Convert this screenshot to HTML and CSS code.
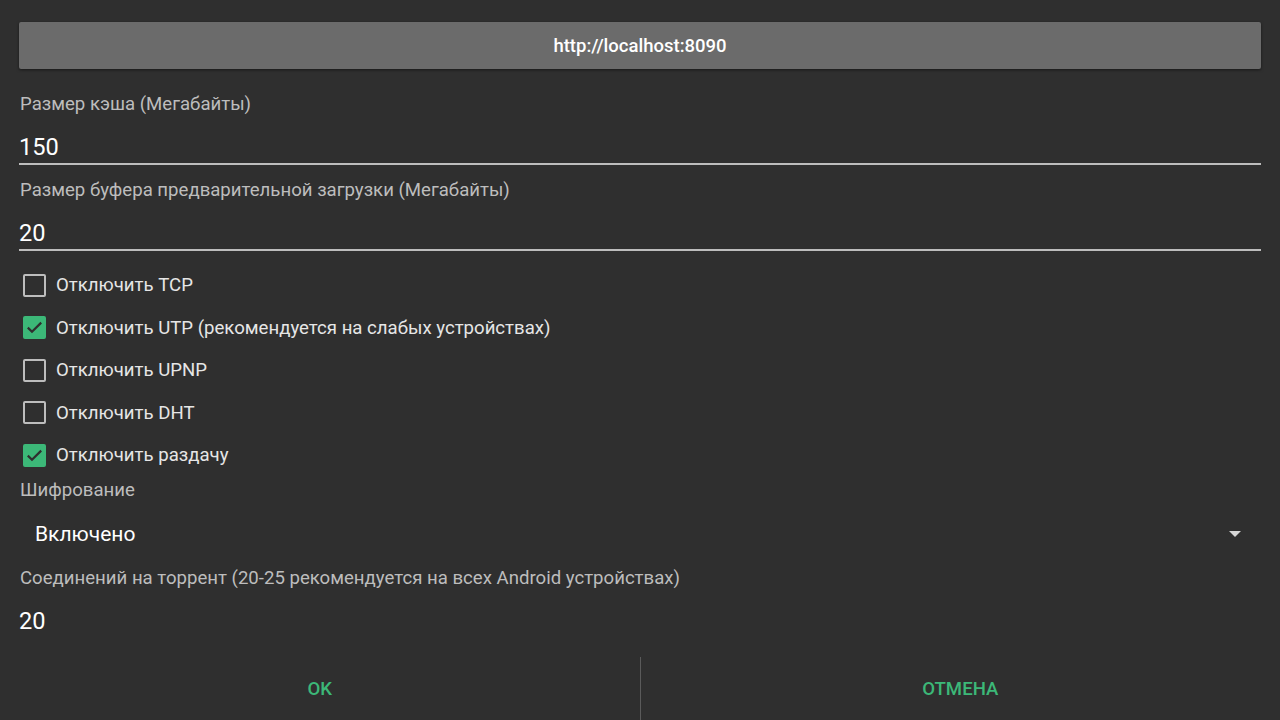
FILE: index.html
```html
<!DOCTYPE html>
<html lang="ru">
<head>
<meta charset="utf-8">
<title>Settings</title>
<link rel="stylesheet" href="styles.css">
</head>
<body>
<div class="dialog">
  <div class="content">
    <div class="host-btn">http://localhost:8090</div>

    <div class="field">
      <div class="label">Размер кэша (Мегабайты)</div>
      <div class="value underline">150</div>
    </div>
    <div class="field">
      <div class="label">Размер буфера предварительной загрузки (Мегабайты)</div>
      <div class="value underline">20</div>
    </div>

    <div class="checks">
      <div class="check"><span class="box"></span><span class="check-text">Отключить TCP</span></div>
      <div class="check"><span class="box on"><svg viewBox="0 0 19 19"><path d="M2.8 9.6l4.2 4.2 9.2-9.2" fill="none" stroke="#2f2f2f" stroke-width="2.2"/></svg></span><span class="check-text">Отключить UTP (рекомендуется на слабых устройствах)</span></div>
      <div class="check"><span class="box"></span><span class="check-text">Отключить UPNP</span></div>
      <div class="check"><span class="box"></span><span class="check-text">Отключить DHT</span></div>
      <div class="check"><span class="box on"><svg viewBox="0 0 19 19"><path d="M2.8 9.6l4.2 4.2 9.2-9.2" fill="none" stroke="#2f2f2f" stroke-width="2.2"/></svg></span><span class="check-text">Отключить раздачу</span></div>
    </div>

    <div class="label label-tight">Шифрование</div>
    <div class="spinner">
      <span class="spinner-text">Включено</span>
      <span class="arrow"></span>
    </div>

    <div class="label">Соединений на торрент (20-25 рекомендуется на всех Android устройствах)</div>
    <div class="value">20</div>
  </div>

  <div class="actions">
    <div class="action">OK</div>
    <div class="action divider">ОТМЕНА</div>
  </div>
</div>
</body>
</html>
```

FILE: styles.css
```css
html, body {
  margin: 0;
  padding: 0;
  background: #2f2f2f;
}
body {
  font-family: Roboto, "Noto Sans", "Liberation Sans", sans-serif;
  color: #ffffff;
  width: 1280px;
  height: 720px;
  overflow: hidden;
}
.dialog {
  display: flex;
  flex-direction: column;
  height: 720px;
}
.content {
  padding: 22px 19px 0 19px;
  display: flex;
  flex-direction: column;
}
.host-btn {
  height: 47px;
  background: #6b6b6b;
  border-radius: 2px;
  box-shadow: 0 1px 3px rgba(0,0,0,0.5);
  display: flex;
  align-items: center;
  justify-content: center;
  font-size: 18.5px;
  font-weight: 500;
  color: #ffffff;
  margin-bottom: 10px;
}
.field {
  display: flex;
  flex-direction: column;
  margin-top: 13px;
}
.label {
  font-size: 18.6px;
  line-height: 24px;
  height: 24px;
  color: #bdbdbd;
  padding-left: 1px;
}
.label-tight {
  margin-top: 1.5px;
}
.value {
  font-size: 23.6px;
  line-height: 30px;
  padding-top: 16px;
  padding-bottom: 1px;
  color: #ffffff;
}
.value.underline {
  border-bottom: 2px solid #bdbdbd;
}
.checks {
  margin-top: 13px;
  display: flex;
  flex-direction: column;
}
.check {
  height: 42.5px;
  display: flex;
  align-items: center;
  padding-left: 4px;
}
.box {
  width: 19px;
  height: 19px;
  border: 2px solid #bdbdbd;
  border-radius: 2px;
  margin-right: 10px;
  display: flex;
  align-items: center;
  justify-content: center;
  box-sizing: content-box;
}
.box.on {
  background: #3cb878;
  border-color: #3cb878;
}
.box svg {
  width: 19px;
  height: 19px;
  display: block;
}
.check-text {
  font-size: 18.6px;
  color: #e6e6e6;
}
.spinner {
  height: 64px;
  display: flex;
  align-items: center;
  justify-content: space-between;
  padding-left: 16px;
  padding-right: 20px;
}
.spinner-text {
  font-size: 21px;
  color: #ffffff;
}
.arrow {
  width: 0;
  height: 0;
  border-left: 6.5px solid transparent;
  border-right: 6.5px solid transparent;
  border-top: 6.5px solid #d6d6d6;
}
.actions {
  margin-top: 20px;
  height: 64px;
  display: flex;
}
.action {
  flex: 1;
  display: flex;
  align-items: center;
  justify-content: center;
  font-size: 18.6px;
  font-weight: 500;
  color: #3cb878;
}
.action.divider {
  border-left: 1px solid #5a5a5a;
}
```
